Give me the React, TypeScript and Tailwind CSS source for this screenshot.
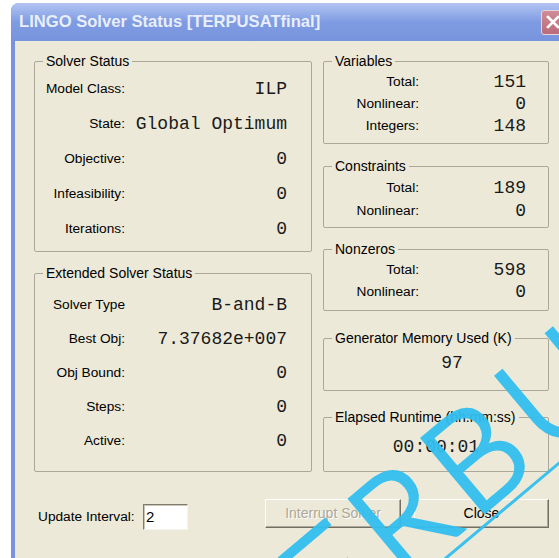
import React from "react";

type Row = { label: string; value: string };

const sans = "font-['Liberation_Sans',Arial,sans-serif]";
const mono = "font-['Liberation_Mono','Courier_New',monospace]";

function Group({
  title,
  className,
  children,
}: {
  title: string;
  className: string;
  children: React.ReactNode;
}) {
  return (
    <fieldset className={`border border-[#aca899] rounded-[2px] ${className}`}>
      <legend className="ml-[8px] px-[3px] text-[14px] leading-[16px] text-black">{title}</legend>
      {children}
    </fieldset>
  );
}

function LeftRows({ rows, rowClass, padClass }: { rows: Row[]; rowClass: string; padClass: string }) {
  return (
    <div className={padClass}>
      {rows.map((r) => (
        <div key={r.label} className={`flex items-center ${rowClass}`}>
          <div className="w-[90px] text-right text-[13.7px] leading-[16px] text-black whitespace-nowrap">{r.label}</div>
          <div
            className={`ml-[2px] w-[160px] text-right text-[18px] leading-[20px] text-[#1a1a1a] whitespace-nowrap ${mono}`}
          >
            {r.value}
          </div>
        </div>
      ))}
    </div>
  );
}

function RightRows({ rows, rowClass }: { rows: Row[]; rowClass: string }) {
  return (
    <div className="pt-[2px]">
      {rows.map((r) => (
        <div key={r.label} className={`flex items-center ${rowClass}`}>
          <div className="w-[95px] text-right text-[13.7px] leading-[16px] text-black">{r.label}</div>
          <div className={`w-[107px] text-right text-[18px] leading-[20px] text-[#1a1a1a] ${mono}`}>{r.value}</div>
        </div>
      ))}
    </div>
  );
}

export default function App() {
  return (
    <div className={`relative w-[559px] h-[558px] overflow-hidden bg-white ${sans}`}>
      {/* dialog window */}
      <div className="ml-[11px] mt-[3px] w-[559px] h-[600px] rounded-t-[8px] bg-[#7a93df] flex flex-col">
        {/* title bar */}
        <div className="h-[38px] rounded-t-[8px] bg-gradient-to-b from-[#b3c4f2] via-[#7f9ce2] to-[#7793de] flex items-center pl-[8px]">
          <span className="flex-1 text-[16.6px] font-bold text-[#e9eefc] leading-none pt-[1px]">
            LINGO Solver Status [TERPUSATfinal]
          </span>
          <div className="mr-[5px] w-[24px] h-[25px] rounded-[3px] border border-[#e6d6de] bg-gradient-to-b from-[#cf8c97] to-[#bb6a79] flex items-center justify-center">
            <svg width="14" height="14" viewBox="0 0 14 14">
              <path d="M2 2 L12 12 M12 2 L2 12" stroke="#ffffff" strokeWidth="2.6" strokeLinecap="square" />
            </svg>
          </div>
        </div>

        {/* client area */}
        <div className="ml-[4px] flex-1 bg-[#ece9d8] pl-[19px] pt-[12px]">
          <div className="flex gap-[11px]">
            {/* left column */}
            <div className="w-[278px] flex flex-col">
              <Group title="Solver Status" className="h-[199px]">
                <LeftRows
                  padClass="pt-[2px]"
                  rowClass="h-[35px]"
                  rows={[
                    { label: "Model Class:", value: "ILP" },
                    { label: "State:", value: "Global Optimum" },
                    { label: "Objective:", value: "0" },
                    { label: "Infeasibility:", value: "0" },
                    { label: "Iterations:", value: "0" },
                  ]}
                />
              </Group>
              <Group title="Extended Solver Status" className="mt-[13px] h-[207px]">
                <LeftRows
                  padClass="pt-[7px]"
                  rowClass="h-[34px]"
                  rows={[
                    { label: "Solver Type", value: "B-and-B" },
                    { label: "Best Obj:", value: "7.37682e+007" },
                    { label: "Obj Bound:", value: "0" },
                    { label: "Steps:", value: "0" },
                    { label: "Active:", value: "0" },
                  ]}
                />
              </Group>
            </div>

            {/* right column */}
            <div className="w-[226px] flex flex-col">
              <Group title="Variables" className="h-[91px]">
                <RightRows
                  rowClass="h-[22px]"
                  rows={[
                    { label: "Total:", value: "151" },
                    { label: "Nonlinear:", value: "0" },
                    { label: "Integers:", value: "148" },
                  ]}
                />
              </Group>
              <Group title="Constraints" className="mt-[14px] h-[70px]">
                <RightRows
                  rowClass="h-[23px]"
                  rows={[
                    { label: "Total:", value: "189" },
                    { label: "Nonlinear:", value: "0" },
                  ]}
                />
              </Group>
              <Group title="Nonzeros" className="mt-[13px] h-[70px]">
                <RightRows
                  rowClass="h-[22px]"
                  rows={[
                    { label: "Total:", value: "598" },
                    { label: "Nonlinear:", value: "0" },
                  ]}
                />
              </Group>
              <Group title="Generator Memory Used (K)" className="mt-[19px] h-[61px]">
                <div className="pt-[6px]">
                  <div
                    className={`h-[22px] flex items-center justify-center pl-[32px] text-[18px] leading-[20px] text-[#1a1a1a] ${mono}`}
                  >
                    97
                  </div>
                </div>
              </Group>
              <Group title="Elapsed Runtime (hh:mm:ss)" className="mt-[18px] h-[63px]">
                <div className="pt-[11px]">
                  <div
                    className={`h-[22px] flex items-center justify-center text-[18px] leading-[20px] text-[#1a1a1a] ${mono}`}
                  >
                    00:00:01
                  </div>
                </div>
              </Group>
            </div>
          </div>

          {/* bottom controls */}
          <div className="mt-[27px] flex items-start">
            <div className="ml-[4px] mt-[10px] w-[105px] text-[13.7px] leading-[16px] text-black">Update Interval:</div>
            <div className="mt-[5px] w-[45px] h-[26px] bg-white border border-t-[#7f7c6e] border-l-[#7f7c6e] border-b-[#f6f4ec] border-r-[#f6f4ec] shadow-[inset_1px_1px_0_#c9c6b6] pl-[2px] flex items-center text-[15px] text-black">
              2
            </div>
            <button className="ml-[77px] w-[136px] h-[29px] bg-[#ece9d8] border border-t-white border-l-white border-b-[#716f64] border-r-[#716f64] shadow-[inset_-1px_-1px_0_#aca899] text-[14px] text-[#aca899] [text-shadow:1px_1px_0_#ffffff]">
              Interrupt Solver
            </button>
            <button className="ml-[13px] w-[135px] h-[29px] bg-[#ece9d8] border border-t-white border-l-white border-b-[#716f64] border-r-[#716f64] shadow-[inset_-1px_-1px_0_#aca899] text-[14px] text-black">
              Close
            </button>
          </div>
        </div>
      </div>

      {/* diagonal stamp */}
      <div className="pointer-events-none absolute left-[492px] top-[440px] -translate-x-1/2 -translate-y-1/2 -rotate-[40deg]">
        <div className="font-['Lato','Liberation_Sans',sans-serif] font-light text-[136px] leading-[0.9] tracking-[12px] text-[#33bff0] [-webkit-text-stroke:4px_#33bff0] border-b-[3px] border-[#33bff0] whitespace-nowrap opacity-95">
          TERBUKA
        </div>
      </div>
    </div>
  );
}
